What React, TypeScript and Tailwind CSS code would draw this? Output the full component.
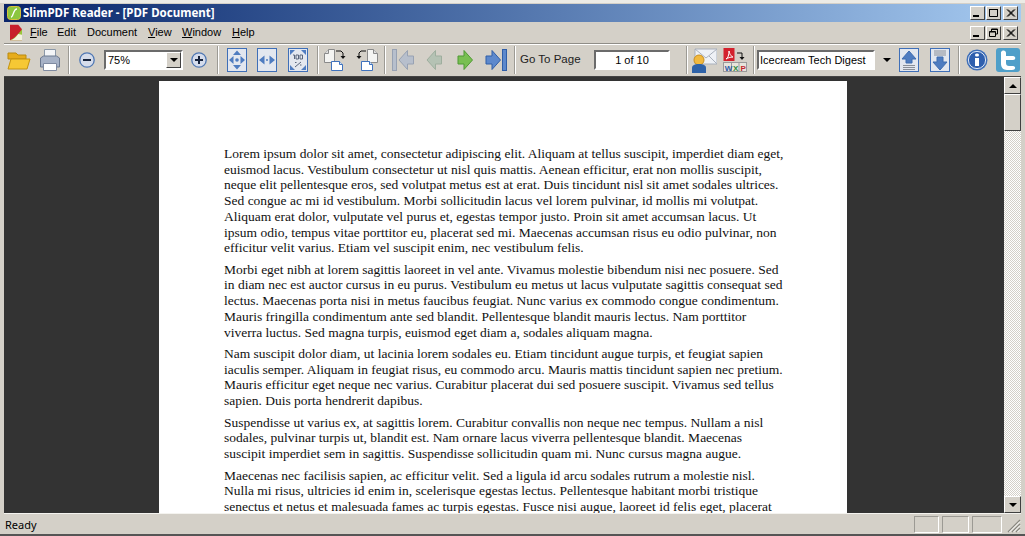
import type { ReactNode } from 'react';

const PARAGRAPHS = [
  [
    'Lorem ipsum dolor sit amet, consectetur adipiscing elit. Aliquam at tellus suscipit, imperdiet diam eget,',
    'euismod lacus. Vestibulum consectetur ut nisl quis mattis. Aenean efficitur, erat non mollis suscipit,',
    'neque elit pellentesque eros, sed volutpat metus est at erat. Duis tincidunt nisl sit amet sodales ultrices.',
    'Sed congue ac mi id vestibulum. Morbi sollicitudin lacus vel lorem pulvinar, id mollis mi volutpat.',
    'Aliquam erat dolor, vulputate vel purus et, egestas tempor justo. Proin sit amet accumsan lacus. Ut',
    'ipsum odio, tempus vitae porttitor eu, placerat sed mi. Maecenas accumsan risus eu odio pulvinar, non',
    'efficitur velit varius. Etiam vel suscipit enim, nec vestibulum felis.',
  ],
  [
    'Morbi eget nibh at lorem sagittis laoreet in vel ante. Vivamus molestie bibendum nisi nec posuere. Sed',
    'in diam nec est auctor cursus in eu purus. Vestibulum eu metus ut lacus vulputate sagittis consequat sed',
    'lectus. Maecenas porta nisi in metus faucibus feugiat. Nunc varius ex commodo congue condimentum.',
    'Mauris fringilla condimentum ante sed blandit. Pellentesque blandit mauris lectus. Nam porttitor',
    'viverra luctus. Sed magna turpis, euismod eget diam a, sodales aliquam magna.',
  ],
  [
    'Nam suscipit dolor diam, ut lacinia lorem sodales eu. Etiam tincidunt augue turpis, et feugiat sapien',
    'iaculis semper. Aliquam in feugiat risus, eu commodo arcu. Mauris mattis tincidunt sapien nec pretium.',
    'Mauris efficitur eget neque nec varius. Curabitur placerat dui sed posuere suscipit. Vivamus sed tellus',
    'sapien. Duis porta hendrerit dapibus.',
  ],
  [
    'Suspendisse ut varius ex, at sagittis lorem. Curabitur convallis non neque nec tempus. Nullam a nisl',
    'sodales, pulvinar turpis ut, blandit est. Nam ornare lacus viverra pellentesque blandit. Maecenas',
    'suscipit imperdiet sem in sagittis. Suspendisse sollicitudin quam mi. Nunc cursus magna augue.',
  ],
  [
    'Maecenas nec facilisis sapien, ac efficitur velit. Sed a ligula id arcu sodales rutrum a molestie nisl.',
    'Nulla mi risus, ultricies id enim in, scelerisque egestas lectus. Pellentesque habitant morbi tristique',
    'senectus et netus et malesuada fames ac turpis egestas. Fusce nisi augue, laoreet id felis eget, placerat',
  ],
];

const MENUS = [
  ['F', 'ile', 'w-[27px]'],
  ['', 'Edit', 'w-[30px]'],
  ['', 'Document', 'w-[61px]'],
  ['V', 'iew', 'w-[34px]'],
  ['W', 'indow', 'w-[50px]'],
  ['H', 'elp', 'w-[30px]'],
];

function Ic({ w = 24, h = 24, children }: { w?: number; h?: number; children: ReactNode }) {
  return (
    <svg width={w} height={h} viewBox={`0 0 ${w} ${h}`} className="block shrink-0">
      {children}
    </svg>
  );
}

function Sep({ className }: { className: string }) {
  return <div className={`h-[28px] w-[2px] shrink-0 border-l border-r border-l-[#9c9a94] border-r-white ${className}`} />;
}

function Slot({ w, children }: { w: string; children: ReactNode }) {
  return <div className={`flex shrink-0 items-center justify-center ${w}`}>{children}</div>;
}

function WinButton({ children }: { children: ReactNode }) {
  return (
    <div className="flex h-[14px] w-[15px] shrink-0 items-center justify-center border border-t-white border-l-white border-r-[#404040] border-b-[#404040] bg-[#d4d0c8]">
      <svg width="11" height="10" viewBox="0 0 11 10">{children}</svg>
    </div>
  );
}

const MinGlyph = <rect x="1" y="7" width="6" height="2" fill="#000" />;
const MaxGlyph = <path d="M1.5 1.5h8v7h-8z M1 1.5h9" fill="none" stroke="#000" />;
const CloseGlyph = <path d="M2 1.5l7 7M3 1.5l7 7M9 1.5l-7 7M10 1.5l-7 7" stroke="#000" fill="none" />;
const RestoreGlyph = <path d="M3.5 3V1h6v5H8 M1.5 3.5h6v5h-6z M1.5 4h6 M3.5 1.5h6" fill="none" stroke="#000" />;

function BlueFrame({ children }: { children: ReactNode }) {
  return (
    <svg width="20" height="24" viewBox="0 0 20 24" className="block shrink-0">
      <rect x="0.5" y="0.5" width="19" height="23" fill="#e3e7ef" stroke="#3f6fb8" />
      {children}
    </svg>
  );
}

const BLUE = '#4f7cc0';

function Arrow({ fill, stroke, dir, bar }: { fill: string; stroke: string; dir: 'l' | 'r'; bar?: boolean }) {
  const head = dir === 'r' ? 'M1 6h6V0.500L15.500 10 7 19.500V14H1z' : 'M15.500 6h-6V0.500L1 10l8.500 9.500V14h6z';
  if (!bar) {
    return (
      <svg width="16" height="20" viewBox="0 0 16 20" className="block shrink-0">
        <path d={head} fill={fill} stroke={stroke} />
      </svg>
    );
  }
  return (
    <svg width="22" height="22" viewBox="0 0 22 22" className="block shrink-0">
      <rect x={dir === 'r' ? 17.500 : 0.500} y="0.500" width="4" height="21" fill={fill} stroke={stroke} />
      <g transform={dir === 'r' ? 'translate(0 1)' : 'translate(6 1)'}>
        <path d={head} fill={fill} stroke={stroke} />
      </g>
    </svg>
  );
}

function DocPair({ flip }: { flip?: boolean }) {
  return (
    <svg width="24" height="24" viewBox="0 0 24 24" className="block shrink-0">
      <g transform={flip ? 'translate(24 0) scale(-1 1)' : undefined}>
        <path d="M1.5 5.500l4-4h6v13h-10z" fill="#f4f4f2" stroke="#8a8a8a" />
        <path d="M1.5 5.500h4v-4" fill="#ddd" stroke="#8a8a8a" />
        <path d="M13 3h5l2 2v3" fill="none" stroke="#111" />
        <path d="M17.500 8h5l-2.500 3z" fill="#111" />
      </g>
      <g transform={flip ? 'translate(-1 0)' : 'translate(1 0)'}>
        <path d="M7.500 13.500h8l3 3v6h-11z" fill="#fff" stroke="#3f72bd" />
        <path d="M15.500 13.500v3h3" fill="#d7e3f4" stroke="#3f72bd" />
      </g>
    </svg>
  );
}

function Combo({ children }: { children: ReactNode }) {
  return <div className="flex h-[20px] items-center border-2 border-t-[#6b6b6b] border-l-[#6b6b6b] border-r-white border-b-white bg-white text-black">{children}</div>;
}

export default function App() {
  return (
    <div className="flex h-[536px] w-[1025px] flex-col overflow-hidden border-t-[3px] border-b-2 border-t-[#ecebe6] border-b-[#555] bg-[#d4d0c8] px-[4px] pt-[1px] font-['Noto_Sans','DejaVu_Sans',sans-serif] text-[11px] text-black">
      {/* title bar */}
      <div className="flex h-[18px] shrink-0 items-center bg-gradient-to-r from-[#0a246a] to-[#a6caf0] pl-[3px] pr-[3px]">
        <svg width="14" height="14" viewBox="0 0 14 14" className="block shrink-0">
          <rect x="0.500" y="0.500" width="13" height="13" rx="3" fill="#8cc63f" stroke="#d8c13a" />
          <path d="M4 11c2.500 0 2-8 6-8" fill="none" stroke="#fff" strokeWidth="1.300" />
        </svg>
        <span className="ml-[2px] font-['Noto_Sans',sans-serif] text-[11.500px] font-bold leading-none whitespace-nowrap text-white">SlimPDF Reader - [PDF Document]</span>
        <div className="ml-auto flex items-center">
          <WinButton>{MinGlyph}</WinButton>
          <div className="w-[1px]" />
          <WinButton>{MaxGlyph}</WinButton>
          <div className="w-[2px]" />
          <WinButton>{CloseGlyph}</WinButton>
        </div>
      </div>

      {/* menu bar */}
      <div className="flex h-[21px] shrink-0 items-center pr-[3px] pl-[6px]">
        <svg width="12" height="17" viewBox="0 0 13 17" className="block shrink-0">
          <path d="M0 0h9l4 5v12H0z" fill="#c8202c" />
          <path d="M0 17c5-2 9-7 13-12v12z" fill="#9ac53c" />
          <path d="M0 17c4-1 7-4 9-7l4 1v6z" fill="#f2f1df" />
        </svg>
        <div className="ml-[3px] flex items-center pl-[5px] font-['Liberation_Sans',sans-serif]">
          {MENUS.map(([u, rest, w]) => (
            <span key={rest} className={`shrink-0 whitespace-nowrap leading-none ${w}`}>
              <span className="underline">{u}</span>
              {rest}
            </span>
          ))}
        </div>
        <div className="ml-auto flex items-center">
          <WinButton>{MinGlyph}</WinButton>
          <div className="w-[1px]" />
          <WinButton>{RestoreGlyph}</WinButton>
          <div className="w-[2px]" />
          <WinButton>{CloseGlyph}</WinButton>
        </div>
      </div>

      {/* toolbar */}
      <div className="flex h-[33px] shrink-0 items-center border-t border-t-[#8f8d87] font-['Liberation_Sans',sans-serif] shadow-[inset_0_1px_0_#fff]">
        <Slot w="w-[30px]">
          <Ic w={24} h={22}>
            <path d="M1 4h8l2 2h8v4H1z" fill="#e6ac1c" stroke="#b98a10" />
            <path d="M4 10h19l-3 10H1z" fill="#f6c834" stroke="#c49310" />
          </Ic>
        </Slot>
        <Slot w="w-[32px]">
          <Ic w={22} h={24}>
            <path d="M5.500 1.500h11v8h-11z" fill="#f3f5f8" stroke="#8b98a8" />
            <path d="M1.500 10l3-2h13l3 2v9h-19z" fill="#a7b2c6" stroke="#6d7a90" />
            <path d="M4.500 15.500h13v7h-13z" fill="#fff" stroke="#7f8aa0" />
          </Ic>
        </Slot>
        <Sep className="mr-[8px] ml-[2px]" />
        <Slot w="w-[18px]">
          <Ic w={16} h={16}>
            <circle cx="8" cy="8" r="7.200" fill="#d5dceb" stroke="#5078b4" strokeWidth="1.300" />
            <rect x="4" y="7" width="8" height="2" fill="#16233c" />
          </Ic>
        </Slot>
        <div className="ml-[8px] w-[79px] shrink-0">
          <Combo>
            <span className="flex-1 pl-[2px] text-[11px] leading-none">75%</span>
            <div className="flex h-[16px] w-[15px] items-center justify-center border border-t-white border-l-white border-r-[#404040] border-b-[#404040] bg-[#d4d0c8]">
              <div className="h-0 w-0 border-x-[4px] border-t-[4px] border-x-transparent border-t-black" />
            </div>
          </Combo>
        </div>
        <Slot w="w-[32px]">
          <Ic w={16} h={16}>
            <circle cx="8" cy="8" r="7.200" fill="#d5dceb" stroke="#5078b4" strokeWidth="1.300" />
            <path d="M4 7h3V4h2v3h3v2H9v3H7V9H4z" fill="#16233c" />
          </Ic>
        </Slot>
        <Sep className="mr-[8px] ml-[2px]" />
        <BlueFrame>
          <path d="M10 2.500l4 4.500H6zM10 21.500l4-4.500H6zM2 12l4.500-4v8zM18 12l-4.500-4v8z" fill={BLUE} />
          <circle cx="10" cy="12" r="1.800" fill={BLUE} />
        </BlueFrame>
        <div className="w-[10px]" />
        <BlueFrame>
          <path d="M2 12l5.500-4.500v9zM18 12l-5.500-4.500v9z" fill={BLUE} />
          <circle cx="10" cy="12" r="1" fill={BLUE} />
        </BlueFrame>
        <div className="w-[11px]" />
        <BlueFrame>
          <path d="M2 2h5L2 7zM18 2h-5l5 5zM2 22h5l-5-5zM18 22h-5l5-5z" fill={BLUE} />
          <path d="M5 7h1.500v4M8 7h2.500v4H8zM12 7h2.500v4H12zM7 14.500h1.500M12 17h1.500M13 14l-6 5" fill="none" stroke="#5a667c" />
        </BlueFrame>
        <Sep className="mr-[4px] ml-[9px]" />
        <Slot w="w-[24px]"><DocPair /></Slot>
        <div className="w-[8px]" />
        <Slot w="w-[24px]"><DocPair flip /></Slot>
        <Sep className="mr-[5px] ml-[5px]" />
        <Slot w="w-[24px]"><Arrow dir="l" bar fill="#b7bfcc" stroke="#98a2b3" /></Slot>
        <div className="w-[9px]" />
        <Slot w="w-[20px]"><Arrow dir="l" fill="#b5c2b4" stroke="#9eae9e" /></Slot>
        <div className="w-[11px]" />
        <Slot w="w-[20px]"><Arrow dir="r" fill="#79bf52" stroke="#4f9a34" /></Slot>
        <div className="w-[9px]" />
        <Slot w="w-[24px]"><Arrow dir="r" bar fill="#5c88cc" stroke="#2f5ea8" /></Slot>
        <Sep className="mr-[4px] ml-[6px]" />
        <span className="w-[74px] shrink-0 text-[11.500px] leading-none whitespace-nowrap text-[#222]">Go To Page</span>
        <div className="w-[76px] shrink-0">
          <Combo>
            <span className="w-full text-center text-[11px] leading-none">1 of 10</span>
          </Combo>
        </div>
        <Sep className="mr-[3px] ml-[16px]" />
        <Slot w="w-[26px]">
          <Ic w={26} h={26}>
            <path d="M4 2h22v15H4z" fill="#eef1f6" stroke="#a9b0bc" />
            <path d="M4 2l11 9 11-9M4 17l8-8M26 17l-8-8" fill="none" stroke="#a9b0bc" />
            <circle cx="8" cy="13" r="5" fill="#f1b93f" stroke="#c98f20" />
            <path d="M1 26v-5c0-3 3-4 7-4s7 1 7 4v5z" fill="#2e62a8" />
          </Ic>
        </Slot>
        <div className="w-[6px]" />
        <Slot w="w-[24px]">
          <Ic w={24} h={24}>
            <rect x="0.500" y="0" width="11" height="13" fill="#d3212d" />
            <path d="M3 11c2-1 3-4 3-8 1 4 2 5 4 6-3 0-5 1-7 2z" fill="none" stroke="#fff" />
            <path d="M14 5h5v4" fill="none" stroke="#111" />
            <path d="M16.500 9h5L19 12z" fill="#111" />
            <rect x="0.500" y="14.500" width="23" height="9" fill="#e7e4dc" stroke="#9a9a9a" />
            <path d="M8.500 15v8M16 15v8" stroke="#9a9a9a" />
            <text x="1.800" y="22.500" fontSize="8" fontWeight="700" fill="#2e5ca8" fontFamily="'Liberation Sans', sans-serif">W</text>
            <text x="10" y="22.500" fontSize="8" fontWeight="700" fill="#2f8a3a" fontFamily="'Liberation Sans', sans-serif">X</text>
            <text x="17.500" y="22.500" fontSize="8" fontWeight="700" fill="#c3262c" fontFamily="'Liberation Sans', sans-serif">P</text>
          </Ic>
        </Slot>
        <Sep className="mr-[2px] ml-[6px]" />
        <div className="w-[118px] shrink-0">
          <Combo>
            <span className="pl-[1px] text-[11px] leading-none whitespace-nowrap">Icecream Tech Digest</span>
          </Combo>
        </div>
        <Slot w="w-[24px]">
          <div className="h-0 w-0 border-x-[4px] border-t-[4px] border-x-transparent border-t-black" />
        </Slot>
        <BlueFrame>
          <path d="M10 3l7 8h-4v4H7v-4H3z" fill={BLUE} stroke="#3f6cb0" />
          <path d="M4 17.500h12M4 19.500h12M4 21.500h12" stroke="#8a8f98" />
        </BlueFrame>
        <div className="w-[11px]" />
        <BlueFrame>
          <path d="M4 3h12M4 5h12M4 7h12" stroke="#8a8f98" />
          <path d="M7 9h6v5h4l-7 8-7-8h4z" fill={BLUE} stroke="#3f6cb0" />
        </BlueFrame>
        <Sep className="mr-[6px] ml-[8px]" />
        <Slot w="w-[22px]">
          <Ic w={22} h={22}>
            <circle cx="11" cy="11" r="10.500" fill="#3f6fb8" />
            <circle cx="11" cy="11" r="8.600" fill="#2f5fae" stroke="#dbe5f4" />
            <rect x="9" y="9" width="4" height="8" fill="#fff" />
            <rect x="9" y="4.500" width="4" height="3" rx="1.500" fill="#fff" />
          </Ic>
        </Slot>
        <div className="w-[8px]" />
        <Slot w="w-[24px]">
          <Ic w={24} h={24}>
            <rect width="24" height="24" rx="3" fill="#4f9fc9" />
            <path d="M6 3c2-1 4 0 4 2v3h7c3 0 3 4 0 4h-7v3c0 2 1 3 3 3h4c3 0 3 4-1 4h-5c-4 0-6-3-6-6V4z" fill="#fff" />
          </Ic>
        </Slot>
      </div>

      {/* document area */}
      <div className="flex min-h-0 flex-1 border-t border-t-[#444] border-b border-b-[#f4f3ef]">
        <div className="flex min-w-0 flex-1 overflow-hidden bg-[#333333] pt-[4px] pl-[155px]">
          <div className="h-[600px] w-[688px] shrink-0 bg-white pt-[65px] pl-[65px] font-['Liberation_Serif',serif] text-[13.500px] leading-[15.700px] text-[#111]">
            {PARAGRAPHS.map((lines) => (
              <p key={lines[0]} className="mb-[5.800px]">
                {lines.map((line) => (
                  <span key={line} className="block whitespace-nowrap">{line}</span>
                ))}
              </p>
            ))}
          </div>
        </div>
        {/* scrollbar */}
        <div className="flex w-[17px] shrink-0 flex-col bg-[repeating-conic-gradient(#d4d0c8_0%_25%,#ffffff_0%_50%)] bg-[length:2px_2px]">
          <div className="flex h-[17px] shrink-0 items-center justify-center border border-t-white border-l-white border-r-[#404040] border-b-[#404040] bg-[#d4d0c8]">
            <div className="h-0 w-0 border-x-[4px] border-b-[4px] border-x-transparent border-b-black" />
          </div>
          <div className="h-[37px] shrink-0 border border-t-white border-l-white border-r-[#404040] border-b-[#404040] bg-[#d4d0c8]" />
          <div className="flex-1" />
          <div className="flex h-[17px] shrink-0 items-center justify-center border border-t-white border-l-white border-r-[#404040] border-b-[#404040] bg-[#d4d0c8]">
            <div className="h-0 w-0 border-x-[4px] border-t-[4px] border-x-transparent border-t-black" />
          </div>
        </div>
      </div>

      {/* status bar */}
      <div className="flex h-[20px] shrink-0 items-center">
        <span className="pl-[1px] leading-none">Ready</span>
        <div className="ml-auto flex items-center gap-[3px]">
          <div className="h-[17px] w-[25px] border border-t-[#9c9a94] border-l-[#9c9a94] border-r-white border-b-white" />
          <div className="h-[17px] w-[27px] border border-t-[#9c9a94] border-l-[#9c9a94] border-r-white border-b-white" />
          <div className="h-[17px] w-[30px] border border-t-[#9c9a94] border-l-[#9c9a94] border-r-white border-b-white" />
          <svg width="17" height="17" viewBox="0 0 17 17" className="-ml-[1px] block shrink-0">
            <path d="M16 4L4 16M16 8l-8 8M16 12l-4 4" stroke="#8a8880" strokeWidth="1.300" />
            <path d="M16 5.500L5.500 16M16 9.500L9.500 16M16 13.500L13.500 16" stroke="#fff" />
          </svg>
        </div>
      </div>
    </div>
  );
}
